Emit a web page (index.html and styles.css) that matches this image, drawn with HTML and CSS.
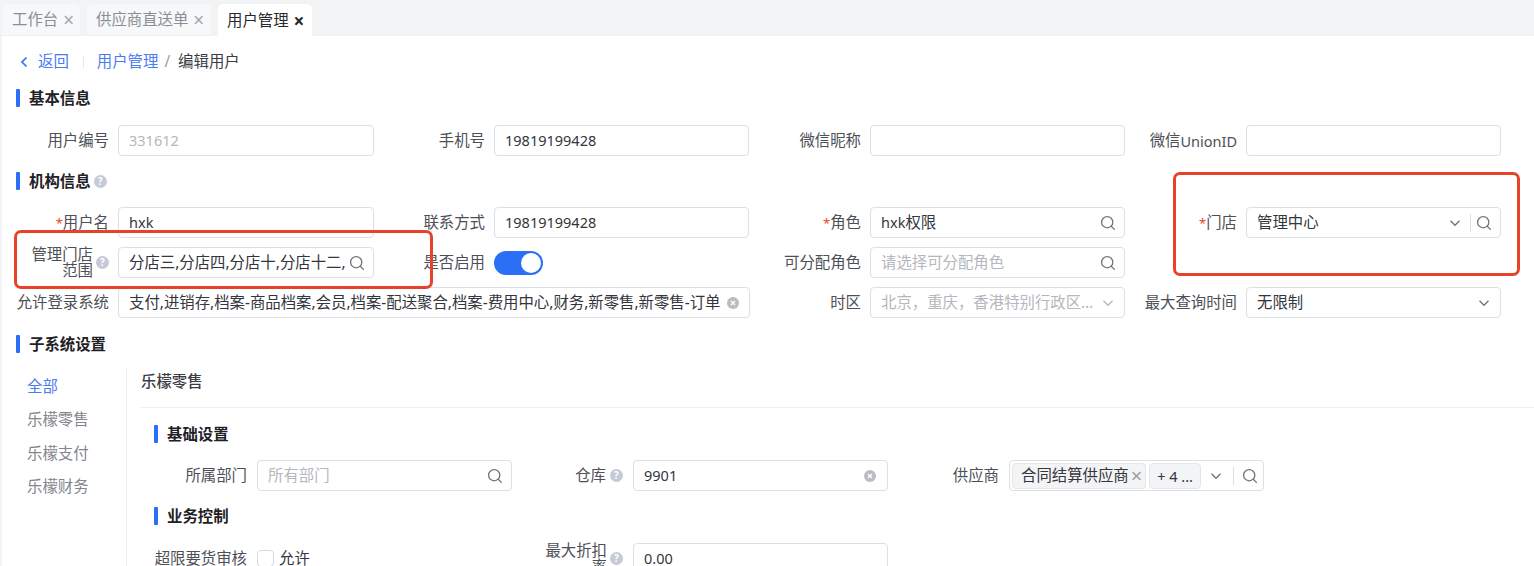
FILE: index.html
```html
<!DOCTYPE html>
<html lang="zh-CN">
<head>
<meta charset="utf-8">
<title>编辑用户</title>
<link rel="stylesheet" href="styles.css">
</head>
<body>
<svg class="defs" width="0" height="0" aria-hidden="true">
  <symbol id="search" viewBox="0 0 16 16"><circle cx="7.2" cy="7.2" r="5.6" fill="none" stroke="currentColor" stroke-width="1.3"/><path d="M11.2 11.2l3.2 3.2" fill="none" stroke="currentColor" stroke-width="1.3" stroke-linecap="round"/></symbol>
  <symbol id="chev" viewBox="0 0 12 12"><path d="M1.5 3.8L6 8.3l4.5-4.5" fill="none" stroke="currentColor" stroke-width="1.3"/></symbol>
  <symbol id="clear" viewBox="0 0 12 12"><circle cx="6" cy="6" r="6" fill="currentColor"/><path d="M4 4l4 4M8 4l-4 4" stroke="#fff" stroke-width="1.3"/></symbol>
</svg>

<nav class="tabs">
  <div class="tab tab-first">工作台<span class="tab-x">×</span></div>
  <div class="tab tab-wide">供应商直送单<span class="tab-x">×</span></div>
  <div class="tab tab-active">用户管理<span class="tab-x">×</span></div>
</nav>

<main class="page">
  <div class="crumbs">
    <svg class="back-icon" width="8" height="12" viewBox="0 0 8 12"><path d="M6.5 1.5L2 6l4.5 4.5" fill="none" stroke="currentColor" stroke-width="1.7"/></svg>
    <a class="link back">返回</a>
    <span class="crumb-sep"></span>
    <a class="link">用户管理</a>
    <span class="slash">/</span>
    <span>编辑用户</span>
  </div>

  <h2 class="head">基本信息</h2>
  <div class="grid">
    <div class="field"><label class="lab">用户编号</label><div class="box muted"><span class="num">331612</span></div></div>
    <div class="field"><label class="lab">手机号</label><div class="box"><span class="num">19819199428</span></div></div>
    <div class="field"><label class="lab">微信昵称</label><div class="box"></div></div>
    <div class="field"><label class="lab">微信<span class="num">UnionID</span></label><div class="box"></div></div>
  </div>

  <h2 class="head head-org">机构信息<span class="help">?</span></h2>
  <div class="grid grid-org">
    <div class="field"><label class="lab"><i class="req">*</i>用户名</label><div class="box"><span class="num">hxk</span></div></div>
    <div class="field"><label class="lab">联系方式</label><div class="box"><span class="num">19819199428</span></div></div>
    <div class="field"><label class="lab"><i class="req">*</i>角色</label><div class="box"><span class="val"><span class="num">hxk</span>权限</span><svg class="ico"><use href="#search"/></svg></div></div>
    <div class="field"><label class="lab"><i class="req">*</i>门店</label><div class="box"><span class="val">管理中心</span><svg class="chev"><use href="#chev"/></svg><span class="vbar"></span><svg class="ico"><use href="#search"/></svg></div></div>

    <div class="field"><label class="lab lab-help"><span class="wrap">管理门店<br>范围</span><span class="help">?</span></label><div class="box"><span class="val">分店三,分店四,分店十,分店十二,</span><svg class="ico"><use href="#search"/></svg></div></div>
    <div class="field"><label class="lab">是否启用</label><div class="switch"><span class="knob"></span></div></div>
    <div class="field"><label class="lab">可分配角色</label><div class="box muted"><span class="val">请选择可分配角色</span><svg class="ico dark"><use href="#search"/></svg></div></div>
    <div class="field"></div>

    <div class="field field-span"><label class="lab">允许登录系统</label><div class="box"><span class="val">支付,进销存,档案-商品档案,会员,档案-配送聚合,档案-费用中心,财务,新零售,新零售-订单</span><svg class="clr"><use href="#clear"/></svg></div></div>
    <div class="field"><label class="lab">时区</label><div class="box muted"><span class="val">北京，重庆，香港特别行政区…</span><svg class="chev chev-muted"><use href="#chev"/></svg></div></div>
    <div class="field"><label class="lab">最大查询时间</label><div class="box"><span class="val">无限制</span><svg class="chev"><use href="#chev"/></svg></div></div>
  </div>

  <h2 class="head head-sub">子系统设置</h2>

  <div class="sub">
    <aside class="side">
      <a class="side-item side-on">全部</a>
      <a class="side-item">乐檬零售</a>
      <a class="side-item">乐檬支付</a>
      <a class="side-item">乐檬财务</a>
    </aside>
    <section class="panel">
      <div class="panel-title">乐檬零售</div>
      <div class="panel-body">
        <h2 class="head head-inner">基础设置</h2>
        <div class="grid2">
          <div class="field"><label class="lab">所属部门</label><div class="box muted"><span class="val">所有部门</span><svg class="ico dark"><use href="#search"/></svg></div></div>
          <div class="field"><label class="lab">仓库<span class="help">?</span></label><div class="box"><span class="val"><span class="num">9901</span></span><svg class="clr clr-lg"><use href="#clear"/></svg></div></div>
          <div class="field"><label class="lab">供应商</label><div class="box box-tags"><span class="tag">合同结算供应商<span class="tag-x">×</span></span><span class="tag"><span class="num">+ 4 ...</span></span><svg class="chev chev-tag"><use href="#chev"/></svg><span class="vbar"></span><svg class="ico"><use href="#search"/></svg></div></div>
        </div>
        <h2 class="head head-biz">业务控制</h2>
        <div class="grid2 grid-biz">
          <div class="field field-check"><label class="lab">超限要货审核</label><span class="check"></span><span>允许</span></div>
          <div class="field"><label class="lab lab-help"><span class="wrap">最大折扣<br>率</span><span class="help">?</span></label><div class="box"><span class="num">0.00</span></div></div>
        </div>
      </div>
    </section>
  </div>
</main>

<div class="mark mark-left"></div>
<div class="mark mark-right"></div>
</body>
</html>
```

FILE: styles.css
```css
* { box-sizing: border-box; }
html, body { margin: 0; height: 566px; overflow: hidden; }
body {
  background: #f2f3f5;
  color: #33363d;
  font: 15.4px/20px "Noto Sans", "Noto Sans CJK SC", sans-serif;
  position: relative;
}
.defs { position: absolute; }
h2 { margin: 0; }
i { font-style: normal; }
.num { font-size: 14.5px; }
.box > .num { margin-top: -1px; }

.tabs { display: flex; gap: 7px; height: 36px; padding: 4px 0 0 2px; }
.tab {
  width: 78px; height: 32px; padding: 1px 0 0 9px;
  display: flex; align-items: center; gap: 5px;
  background: #f7f8f9; color: #8b8e95;
  border-radius: 5px 5px 0 0;
  border-bottom: 1px solid #eceef0;
  white-space: nowrap;
}
.tab-first { padding-left: 10px; }
.tab-wide { width: 124px; }
.tab-active { width: 94px; background: #fff; color: #26282d; border-bottom: 0; }
.tab-x { font-size: 19px; line-height: 20px; color: #a4a7ad; }
.tab-active .tab-x { color: #26282d; font-weight: 700; }

.page { margin-left: 2px; height: 530px; background: #fff; padding: 0 0 0 14px; overflow: hidden; }

.crumbs { display: flex; align-items: center; height: 50px; color: #3a3d44; padding: 1px 0 0 4px; }
.back-icon { color: #3370ff; flex: none; }
.link { color: #4a7cf0; }
.back { margin-left: 10px; }
.crumb-sep { width: 1px; height: 12px; background: #e6e8eb; margin: 0 13px 0 14px; }
.slash { color: #9a9da3; margin: 0 8px 0 6px; }

.head {
  display: flex; align-items: center; gap: 9px;
  height: 24px; padding-top: 1px;
  font-size: 15.4px; font-weight: 700; color: #1f2126;
}
.head::before { content: ""; width: 4px; height: 18px; background: #2a6ff5; border-radius: 1px; flex: none; margin-top: -1px; }
.head .help { margin-left: -6px; }
.head-org { margin-top: 13px; }
.head-sub { margin-top: 14px; }

.grid {
  display: grid; grid-template-columns: repeat(4, 357px); column-gap: 19px;
  margin-top: 15px;
}
.grid-org { margin-top: 14px; row-gap: 9px; }
.grid > .field:nth-child(4n+1) { margin-right: -1px; }
.grid > .field-span { grid-column: span 2; margin-right: 0; }
.field { display: flex; align-items: center; gap: 9px; height: 31px; min-width: 0; }
.lab { width: 93px; flex: none; display: flex; justify-content: flex-end; align-items: center; text-align: right; color: #4d5057; white-space: nowrap; }
.lab-help { gap: 3px; line-height: 16px; }
.wrap { display: block; }
.req { color: #e8432a; font-size: 13px; }

.box {
  flex: 1; min-width: 0; height: 31px;
  display: flex; align-items: center;
  padding: 0 10px;
  border: 1px solid #dcdfe4; border-radius: 4px;
  background: #fff; color: #33363d;
  white-space: nowrap;
}
.muted { color: #b4b7bd; }
.val { flex: 1; min-width: 0; overflow: hidden; white-space: nowrap; }
.ico { width: 16px; height: 16px; flex: none; color: #6f7278; }
.box .ico { margin-right: -2px; }
.chev { width: 12px; height: 12px; flex: none; color: #6f7278; margin-left: 5px; }
.chev-muted { color: #b4b7bd; }
.vbar { width: 1px; height: 18px; background: #dcdfe4; margin: 0 5px 0 9px; flex: none; }
.clr { width: 12px; height: 12px; flex: none; color: #b9bcc2; margin-left: 5px; }
.clr-lg { margin-right: 1px; }

.help {
  width: 13px; height: 13px; border-radius: 50%;
  background: #c6cad6; color: #fff;
  font-size: 10px; line-height: 13px; text-align: center; font-weight: 700;
  flex: none; display: inline-block;
}
.lab .help { margin-left: 4px; }
.lab-help .help { margin-left: 0; }

.switch { width: 49px; height: 24px; border-radius: 12px; background: #2a6ff5; position: relative; }
.knob { position: absolute; right: 2px; top: 2px; width: 20px; height: 20px; border-radius: 50%; background: #fff; }

.sub { display: flex; margin-top: 12px; }
.side { width: 111px; flex: none; display: flex; flex-direction: column; gap: 13.4px; padding: 9px 0 0 11px; border-right: 1px solid #eef0f2; height: 200px; }
.side-item { color: #83868d; }
.side-on { color: #4a7cf0; }
.panel { flex: 1; min-width: 0; padding-left: 13px; }
.panel-title { height: 40px; padding: 4px 0 0 1px; color: #3a3d44; font-weight: 500; border-bottom: 1px solid #eef0f2; }
.panel-body { padding: 14px 0 0 14px; }
.head-biz { margin-top: 13px; }

.grid2 { display: grid; grid-template-columns: repeat(3, 359px); column-gap: 17px; margin: 14px 0 0 -1px; }
.grid2 .lab { width: 94px; }
.grid2 .field { gap: 10px; }
.grid-biz { margin-top: 15px; }

.box-tags { padding: 0 8px 0 2px; gap: 3px; }
.tag {
  height: 26px; padding: 0 3px 0 8px;
  display: inline-flex; align-items: center; gap: 2px;
  background: #f3f4f6; border: 1px solid #e4e6ea; border-radius: 4px;
  color: #33363d; flex: none;
}
.tag + .tag { padding: 0 7px; }
.tag-x { color: #9a9da3; font-size: 20px; }
.box-tags .chev { margin-left: 6px; }
.box-tags .vbar { margin: 0 3px 0 8px; }
.box-tags .ico { margin: 0 0 0 2px; }

.field-check { gap: 10px; }
.check { width: 17px; height: 17px; border: 1px solid #d6d9de; border-radius: 4px; margin-right: -5px; flex: none; }

.mark { position: absolute; border: 3px solid #e8432a; border-radius: 7px; pointer-events: none; }
.mark-left { left: 14px; top: 230px; width: 419px; height: 59px; }
.mark-right { left: 1173px; top: 172px; width: 347px; height: 104px; }
```
